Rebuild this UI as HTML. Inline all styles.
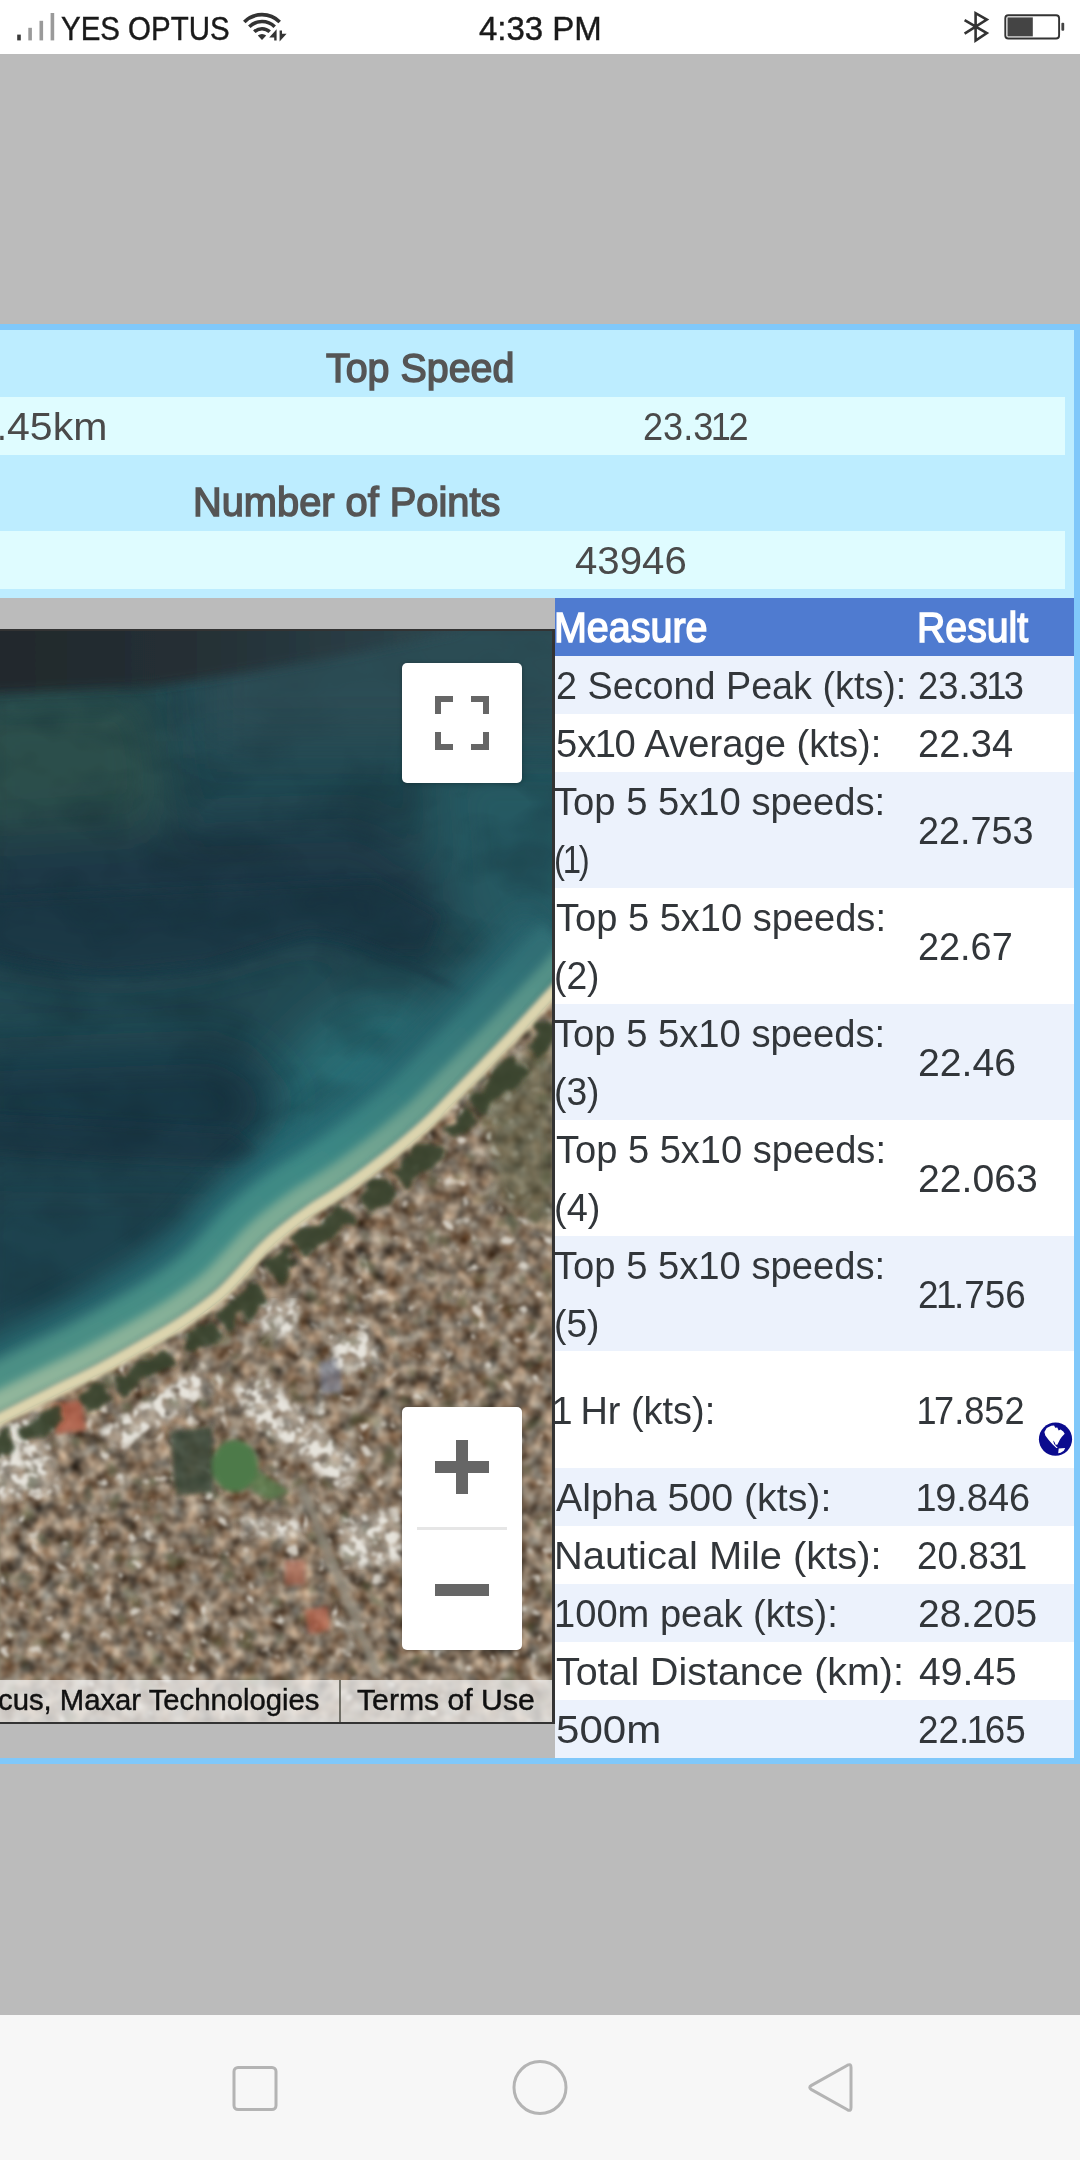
<!DOCTYPE html>
<html>
<head>
<meta charset="utf-8">
<title>GPS Session</title>
<style>
html,body{margin:0;padding:0;}
body{width:1080px;height:2160px;overflow:hidden;background:#bbbbbb;font-family:"Liberation Sans",sans-serif;position:relative;}
.abs{position:absolute;}
.tx i{font-style:normal;}
.tx{position:absolute;white-space:nowrap;transform-origin:0 0;}
#status{left:0;top:0;width:1080px;height:54px;background:#ffffff;}
#panel{left:-600px;top:324px;width:1668px;height:1428px;border:6px solid #80c8fa;background:#bbbbbb;}
#top{left:0;top:330px;width:1074px;height:268px;background:#bdedff;}
.lrow{position:absolute;left:0;width:1065px;height:58px;background:#dffcff;}
#tbl{left:555px;top:598px;width:519px;height:1160px;background:#ffffff;}
.r{position:absolute;left:0;width:519px;}
.r.h{background:#4f7bd0;}
.r.a{background:#ecf2fc;}
.r.b{background:#ffffff;}
#map{left:0;top:629px;width:552px;height:1091px;border-top:2px solid #333;border-right:3px solid #333;border-bottom:2.5px solid #333;overflow:hidden;background:#1f4a55;}
.btn{position:absolute;background:#ffffff;border-radius:5px;box-shadow:0 1px 4px rgba(0,0,0,0.3);}
#attr{position:absolute;left:0;top:1049px;width:552px;height:42px;background:rgba(245,245,245,0.72);}
#texts{position:absolute;left:0;top:0;width:1080px;height:2160px;will-change:transform;}
#nav{left:0;top:2015px;width:1080px;height:145px;background:#f7f7f7;}
</style>
</head>
<body>
<div id="status" class="abs"></div>

<div id="panel" class="abs"></div>
<div id="top" class="abs">
  <div class="lrow" style="top:67px;"></div>
  <div class="lrow" style="top:201px;"></div>
</div>

<div id="map" class="abs">
  <svg width="552" height="1091" viewBox="0 0 552 1091" style="position:absolute;left:0;top:0;display:block;">
<defs>
  <filter id="b6" x="-20%" y="-20%" width="140%" height="140%"><feGaussianBlur stdDeviation="6"/></filter>
  <filter id="b12" x="-30%" y="-30%" width="160%" height="160%"><feGaussianBlur stdDeviation="12"/></filter>
  <filter id="b25" x="-50%" y="-50%" width="200%" height="200%"><feGaussianBlur stdDeviation="25"/></filter>
  <filter id="b3" x="-10%" y="-10%" width="120%" height="120%"><feGaussianBlur stdDeviation="2.5"/></filter>
  <filter id="veg" x="-10%" y="-10%" width="120%" height="120%">
    <feTurbulence type="fractalNoise" baseFrequency="0.045" numOctaves="2" seed="9" result="t"/>
    <feDisplacementMap in="SourceGraphic" in2="t" scale="22" xChannelSelector="R" yChannelSelector="G" result="d"/>
    <feGaussianBlur in="d" stdDeviation="2.2"/>
  </filter>
  <filter id="b5" x="-10%" y="-10%" width="120%" height="120%"><feGaussianBlur stdDeviation="4.5"/></filter>
  <filter id="b1"><feGaussianBlur stdDeviation="2"/></filter>
  <!-- town texture -->
  <filter id="town" x="0" y="0" width="100%" height="100%" color-interpolation-filters="sRGB">
    <feTurbulence type="fractalNoise" baseFrequency="0.07" numOctaves="2" seed="7" result="n"/>
    <feColorMatrix in="n" type="matrix" values="
      0.80 0.24 0 0 0.00
      0.80 0.10 0 0 0.005
      0.76 0 0 0 0.005
      0 0 0 0 1" result="c"/>
    <feGaussianBlur in="c" stdDeviation="1.8" result="cb"/>
    <feComposite in="cb" in2="SourceGraphic" operator="in"/>
  </filter>
  <filter id="roofs2" x="0" y="0" width="100%" height="100%" color-interpolation-filters="sRGB">
    <feTurbulence type="fractalNoise" baseFrequency="0.09" numOctaves="2" seed="31" result="n"/>
    <feColorMatrix in="n" type="matrix" values="
      0 0 0 0 0.90
      0 0 0 0 0.89
      0 0 0 0 0.86
      7 0 0 0 -3.3" result="c"/>
    <feGaussianBlur in="SourceGraphic" stdDeviation="3" result="sg"/>
    <feComposite in="c" in2="sg" operator="in" result="cc"/>
    <feGaussianBlur in="cc" stdDeviation="1.5"/>
  </filter>
  <filter id="roofs" x="0" y="0" width="100%" height="100%" color-interpolation-filters="sRGB">
    <feTurbulence type="fractalNoise" baseFrequency="0.07" numOctaves="2" seed="23" result="n"/>
    <feColorMatrix in="n" type="matrix" values="
      0 0 0 0 0.86
      0 0 0 0 0.84
      0 0 0 0 0.80
      7 0 0 0 -4.7" result="c"/>
    <feGaussianBlur in="c" stdDeviation="1.6" result="cb"/>
    <feComposite in="cb" in2="SourceGraphic" operator="in"/>
  </filter>
  <filter id="greens" x="0" y="0" width="100%" height="100%" color-interpolation-filters="sRGB">
    <feTurbulence type="fractalNoise" baseFrequency="0.05" numOctaves="2" seed="51" result="n"/>
    <feColorMatrix in="n" type="matrix" values="
      0 0 0 0 0.30
      0 0 0 0 0.34
      0 0 0 0 0.22
      0 6 0 0 -3.7" result="c"/>
    <feGaussianBlur in="c" stdDeviation="2" result="cb"/>
    <feComposite in="cb" in2="SourceGraphic" operator="in"/>
  </filter>
  <filter id="seanoise" x="0" y="0" width="100%" height="100%" color-interpolation-filters="sRGB">
    <feTurbulence type="fractalNoise" baseFrequency="0.012 0.02" numOctaves="3" seed="4" result="n"/>
    <feColorMatrix in="n" type="matrix" values="
      0 0 0 0 0.05
      0 0 0 0 0.14
      0 0 0 0 0.18
      2.2 0 0 0 -0.85"/>
  </filter>
  <linearGradient id="dk" gradientUnits="userSpaceOnUse" x1="0" y1="0" x2="480" y2="0"><stop offset="0" stop-color="#232729"/><stop offset="0.4" stop-color="#252f33"/><stop offset="0.75" stop-color="#2a4047"/><stop offset="1" stop-color="#335259"/></linearGradient>
  <linearGradient id="sh1" gradientUnits="userSpaceOnUse" x1="552" y1="330" x2="0" y2="760"><stop offset="0" stop-color="#2b7079"/><stop offset="0.5" stop-color="#2b7c84"/><stop offset="1" stop-color="#2a767c"/></linearGradient>
  <linearGradient id="sh2" gradientUnits="userSpaceOnUse" x1="552" y1="340" x2="0" y2="770"><stop offset="0" stop-color="#347f84"/><stop offset="0.45" stop-color="#45a098"/><stop offset="1" stop-color="#58a898"/></linearGradient>
  <linearGradient id="sh3" gradientUnits="userSpaceOnUse" x1="552" y1="350" x2="0" y2="780"><stop offset="0" stop-color="#5fa89a"/><stop offset="0.45" stop-color="#8fc8aa"/><stop offset="1" stop-color="#aed8b4"/></linearGradient>
  <linearGradient id="sea" x1="0" y1="0" x2="1" y2="0">
    <stop offset="0" stop-color="#27524f"/><stop offset="0.35" stop-color="#214a52"/><stop offset="0.75" stop-color="#224e5a"/><stop offset="1" stop-color="#2b6670"/>
  </linearGradient>
  <path id="coast" d="M580.0,332.0 C574.8,337.7 560.2,353.8 549.0,366.0 C537.8,378.2 523.7,393.7 513.0,405.0 C502.3,416.3 494.2,424.5 485.0,434.0 C475.8,443.5 466.7,452.7 457.5,462.0 C448.3,471.3 439.6,481.0 430.0,490.0 C420.4,499.0 410.3,507.5 400.0,516.0 C389.7,524.5 378.5,533.2 368.0,541.0 C357.5,548.8 346.7,556.5 337.0,563.0 C327.3,569.5 318.3,574.3 310.0,580.0 C301.7,585.7 294.8,590.7 287.0,597.0 C279.2,603.3 273.8,607.2 263.0,618.0 C252.2,628.8 235.6,649.7 222.0,662.0 C208.4,674.3 195.1,683.0 181.5,692.0 C167.9,701.0 154.3,708.2 140.7,716.0 C127.1,723.8 114.8,730.8 100.0,738.5 C85.2,746.2 68.7,753.8 52.0,762.0 C35.3,770.2 13.7,781.3 0.0,788.0 C-13.7,794.7 -25.0,799.7 -30.0,802.0"/>
  <clipPath id="land"><path transform="translate(3,3)" d="M580.0,332.0 C574.8,337.7 560.2,353.8 549.0,366.0 C537.8,378.2 523.7,393.7 513.0,405.0 C502.3,416.3 494.2,424.5 485.0,434.0 C475.8,443.5 466.7,452.7 457.5,462.0 C448.3,471.3 439.6,481.0 430.0,490.0 C420.4,499.0 410.3,507.5 400.0,516.0 C389.7,524.5 378.5,533.2 368.0,541.0 C357.5,548.8 346.7,556.5 337.0,563.0 C327.3,569.5 318.3,574.3 310.0,580.0 C301.7,585.7 294.8,590.7 287.0,597.0 C279.2,603.3 273.8,607.2 263.0,618.0 C252.2,628.8 235.6,649.7 222.0,662.0 C208.4,674.3 195.1,683.0 181.5,692.0 C167.9,701.0 154.3,708.2 140.7,716.0 C127.1,723.8 114.8,730.8 100.0,738.5 C85.2,746.2 68.7,753.8 52.0,762.0 C35.3,770.2 13.7,781.3 0.0,788.0 C-13.7,794.7 -25.0,799.7 -30.0,802.0 L-30,1100 L600,1100 L600,332 Z"/></clipPath>
</defs>
<rect x="0" y="0" width="552" height="1091" fill="#224f58"/>
<!-- ocean shading -->
<g filter="url(#b25)">
  <path d="M-40,60 L150,55 L170,190 L-40,200 Z" fill="#2e5650"/>
  <path d="M430,120 L600,120 L600,340 L490,370 L450,280 Z" fill="#27646c"/>
  <ellipse cx="345" cy="465" rx="70" ry="120" transform="rotate(42 345 465)" fill="#2c7c82"/>
  <path d="M-40,200 L376,186 L460,269 L425,322 L389,321 L311,300 L207,331 L104,341 L-40,321 Z" fill="#1a3a48"/>
</g>
<g filter="url(#b6)">
  <path d="M-40,270 L376,250 L440,285 L425,322 L389,321 L311,300 L207,331 L104,341 L-40,321 Z" fill="#1a3a48" opacity="0.85"/>
</g>
<g filter="url(#b25)">
  <path d="M-40,425 L230,415 L290,469 L240,529 L-40,519 Z" fill="#173a49"/>
  <path d="M-40,539 L230,544 L250,599 L190,659 L100,709 L-40,769 Z" fill="#1d4652"/>
</g>
<g filter="url(#b6)">
  <path d="M-40,485 L100,492 L235,500 L262,525 L240,534 L100,528 L-40,519 Z" fill="#173a49" opacity="0.85"/>
</g>
<rect x="0" y="0" width="552" height="1091" filter="url(#seanoise)" opacity="0.3"/>
<!-- dark top -->
<g filter="url(#b25)">
  <path d="M200,-40 L620,-40 L620,110 L200,110 Z" fill="#33545b" opacity="0.7"/>
</g>
<g filter="url(#b6)">
  <path d="M-30,-30 L500,-30 L455,0 L358,22 L255,40 L153,56 L-30,64 Z" fill="url(#dk)"/>
</g>
<!-- wavy edge -->
<g filter="url(#b3)" opacity="0.55">
  <path d="M-10,322 C60,349 150,344 207,335 C260,326 290,302 325,304 C360,306 380,324 420,339 C450,354 470,364 480,379" fill="none" stroke="#193a48" stroke-width="8"/>
</g>
<!-- shallow water -->
<g filter="url(#b12)" opacity="0.9">
  <use href="#coast" transform="translate(-30,-32)" fill="none" stroke="url(#sh1)" stroke-width="70"/>
</g>
<g filter="url(#b6)">
  <use href="#coast" transform="translate(-24,-26)" fill="none" stroke="url(#sh2)" stroke-width="40"/>
</g>
<g filter="url(#b5)">
  <use href="#coast" transform="translate(-11,-12)" fill="none" stroke="url(#sh3)" stroke-width="22"/>
</g>
<rect x="0" y="0" width="552" height="1091" fill="#22343a" opacity="0.2"/>
<!-- land -->
<g clip-path="url(#land)">
  <rect x="0" y="340" width="552" height="751" fill="#8b7f6a"/>
  <rect x="0" y="340" width="552" height="751" filter="url(#town)"/>
  <rect x="0" y="340" width="552" height="751" filter="url(#greens)" opacity="0.5"/>
  <rect x="0" y="340" width="552" height="751" filter="url(#roofs)" opacity="0.9"/>
  <g transform="translate(0,-631)">
    <g filter="url(#b6)" opacity="0.55">
      <path d="M480,1090 L552,1030 L552,1230 L500,1200 Z" fill="#5f6348"/>
    </g>
    <g filter="url(#b3)">
      <path d="M232,1388 L262,1374 L362,1468 L342,1492 L292,1452 L252,1424 Z M98,1432 L196,1368 L214,1388 L120,1452 Z M337,1520 L398,1508 L404,1560 L345,1570 Z M240,1519 L300,1519 L300,1536 L240,1536 Z M258,1302 L294,1298 L298,1334 L264,1338 Z M-5,1425 L40,1415 L60,1490 L-5,1500 Z M330,1340 L372,1330 L380,1365 L338,1372 Z" fill="#cfcac2" opacity="0.35"/>
      <path d="M52,1404 L82,1400 L86,1430 L56,1434 Z" fill="#b8604a" opacity="0.8"/>
      <path d="M285,1560 L305,1560 L305,1585 L285,1585 Z" fill="#b8705c" opacity="0.7"/>
      <path d="M305,1610 L328,1606 L330,1630 L308,1634 Z" fill="#b8604a" opacity="0.7"/>
      <path d="M318,1362 L340,1358 L342,1392 L322,1394 Z" fill="#8088a0" opacity="0.6"/>
      <path d="M301,1484 L378,1676" stroke="#8f897c" stroke-width="9" fill="none" opacity="0.8"/>
      <path d="M170,1432 L212,1426 L214,1492 L176,1496 Z" fill="#39483a" opacity="0.8"/>
      <path d="M258,1470 L290,1492 L270,1500 L250,1490 Z" fill="#557a4a" opacity="0.8"/>
      <ellipse cx="235" cy="1466" rx="23" ry="26" fill="#4d7a48"/>
    </g>
    <path d="M232,1388 L262,1374 L362,1468 L342,1492 L292,1452 L252,1424 Z M98,1432 L196,1368 L214,1388 L120,1452 Z M337,1520 L398,1508 L404,1560 L345,1570 Z M240,1519 L300,1519 L300,1536 L240,1536 Z M258,1302 L294,1298 L298,1334 L264,1338 Z M-5,1425 L40,1415 L60,1490 L-5,1500 Z M330,1340 L372,1330 L380,1365 L338,1372 Z" fill="#fff" filter="url(#roofs2)"/>
  </g>
</g>
<!-- vegetation strip -->
<g filter="url(#veg)">
  <use href="#coast" transform="translate(16,18)" fill="none" stroke="#37432a" stroke-width="21" stroke-dasharray="50 10 34 16 64 8 26 22" opacity="0.92"/>
</g>
<!-- sand -->
<g filter="url(#b1)">
  <use href="#coast" fill="none" stroke="#dcd4ae" stroke-width="13"/>
</g>
</svg>

  <div class="btn" style="left:402px;top:32px;width:120px;height:120px;">
    <svg width="120" height="120" viewBox="0 0 120 120" style="position:absolute;left:0;top:0"><g fill="#666">
      <path d="M33,33 h18 v6 h-12 v12 h-6 Z"/><path d="M87,33 v18 h-6 v-12 h-12 v-6 Z"/>
      <path d="M33,87 v-18 h6 v12 h12 v6 Z"/><path d="M87,87 h-18 v-6 h12 v-12 h6 Z"/></g></svg>
  </div>
  <div class="btn" style="left:402px;top:776px;width:120px;height:243px;">
    <svg width="120" height="243" viewBox="0 0 120 243" style="position:absolute;left:0;top:0">
      <rect x="33" y="54" width="54" height="12" fill="#666"/><rect x="54" y="33" width="12" height="54" fill="#666"/>
      <rect x="15" y="120" width="90" height="3" fill="#e6e6e6"/>
      <rect x="33" y="177" width="54" height="12" fill="#666"/></svg>
  </div>
  <div id="attr"><div style="position:absolute;left:339px;top:0;width:2px;height:44px;background:rgba(70,70,60,0.7)"></div></div>
</div>

<div id="tbl" class="abs">
  <div class="r h" style="top:0;height:58px;"></div>
  <div class="r a" style="top:58px;height:58px;"></div>
  <div class="r b" style="top:116px;height:58px;"></div>
  <div class="r a" style="top:174px;height:116px;"></div>
  <div class="r b" style="top:290px;height:116px;"></div>
  <div class="r a" style="top:406px;height:116px;"></div>
  <div class="r b" style="top:522px;height:116px;"></div>
  <div class="r a" style="top:638px;height:115px;"></div>
  <div class="r b" style="top:753px;height:117px;"></div>
  <div class="r a" style="top:870px;height:58px;"></div>
  <div class="r b" style="top:928px;height:58px;"></div>
  <div class="r a" style="top:986px;height:58px;"></div>
  <div class="r b" style="top:1044px;height:58px;"></div>
  <div class="r a" style="top:1102px;height:58px;"></div>
</div>

<div id="nav" class="abs"></div>

<svg class="abs" style="left:0;top:0;" width="1080" height="54" viewBox="0 0 1080 54">
  <!-- signal -->
  <rect x="17.2" y="34.6" width="3.6" height="5.8" fill="#3a3a3a"/>
  <rect x="28.3" y="27.8" width="3.6" height="12.6" fill="#9a9a9a"/>
  <rect x="39.5" y="20.8" width="3.6" height="19.6" fill="#9a9a9a"/>
  <rect x="50.6" y="13" width="3.6" height="27.4" fill="#9a9a9a"/>
  <!-- wifi -->
  <g fill="none" stroke="#333" stroke-width="3.6">
    <path d="M244.3,22.0 A25,25 0 0 1 279.7,22.0"/>
    <path d="M249.3,26.7 A18.2,18.2 0 0 1 274.7,26.7"/>
    <path d="M254.3,31.8 A11.2,11.2 0 0 1 269.7,31.8"/>
  </g>
  <path d="M262,40 L257.8,35.6 A6,6 0 0 1 266.2,35.6 Z" fill="#333"/>
  <path d="M276.6,29.2 L276.6,40.6 L274.2,40.6 L274.2,37.4 L269.2,37.4 Z" fill="#333"/>
  <path d="M279.6,30.4 L282.0,30.4 L282.0,33.8 L286.6,33.8 L279.6,41.4 Z" fill="#333"/>
  <!-- bluetooth -->
  <path d="M964.6,20.2 L986.8,33 L975.6,40.6 L975.6,13.2 L986.8,19.6 L964.6,33.6" fill="none" stroke="#333" stroke-width="2.6" stroke-linejoin="miter"/>
  <!-- battery -->
  <rect x="1005.3" y="15.3" width="53.8" height="23.2" rx="3" ry="3" fill="none" stroke="#333" stroke-width="1.9"/>
  <rect x="1007.5" y="17.4" width="25.3" height="19" fill="#444"/>
  <rect x="1061.4" y="22.8" width="2.8" height="8" rx="1" fill="#444"/>
</svg>
<svg class="abs" style="left:0;top:2015px;" width="1080" height="145" viewBox="0 2015 1080 145">
  <g fill="none" stroke="#b4b4b4" stroke-width="3" stroke-linejoin="round">
    <rect x="234" y="2067.5" width="42" height="42" rx="4"/>
    <circle cx="540" cy="2087.5" r="26"/>
    <path d="M811.5,2085.4 L847.5,2065.2 Q851,2063.4 851,2067.5 L851,2107.5 Q851,2111.6 847.5,2109.8 L811.5,2089.6 Q808,2087.5 811.5,2085.4 Z"/>
  </g>
</svg>
<!-- globe -->
<svg class="abs" style="left:1036px;top:1420px;" width="40" height="40" viewBox="1036 1420 40 40">
  <circle cx="1055.5" cy="1439.2" r="16.6" fill="#0b0b8e"/>
  <path d="M1044.4,1431.9 L1046.7,1428.1 L1051.3,1425.8 L1054.1,1425.4 L1055.2,1427.7 L1057.3,1427.4 L1058.7,1430.5 L1060.6,1429.5 L1063.3,1431.4 L1064.7,1433.7 L1061.9,1436.7 L1060.1,1439.3 L1058.7,1441.9 L1057.3,1444.8 L1055.5,1444.8 L1054.5,1442.0 L1053.1,1440.6 L1054.1,1443.9 L1057.8,1448.1 L1056.4,1448.1 L1052.2,1443.9 L1048.5,1439.7 L1045.3,1435.6 Z" fill="#fff"/>
  <path d="M1058.7,1448.5 L1065.2,1448.0 L1063.8,1450.8 L1060.6,1452.7 L1058.2,1453.2 Z" fill="#fff"/>
</svg>


<div id="texts">
<span class="tx" style="left:61.0px;top:6.2px;font-size:34px;line-height:44px;transform:scaleX(0.8663);color:#1a1a1a;-webkit-text-stroke:0.45px #1a1a1a;">YES OPTUS</span>
<span class="tx" style="left:478.5px;top:6.2px;font-size:34px;line-height:44px;transform:scaleX(0.9694);color:#1a1a1a;-webkit-text-stroke:0.45px #1a1a1a;">4:33 PM</span>
<span class="tx" style="left:326.0px;top:342.0px;font-size:41px;line-height:53px;transform:scaleX(0.9611);color:#555555;-webkit-text-stroke:1.5px #555555;">Top Speed</span>
<span class="tx" style="left:193.1px;top:476.0px;font-size:41px;line-height:53px;transform:scaleX(0.9705);color:#555555;-webkit-text-stroke:1.5px #555555;">Number of Points</span>
<span class="tx" style="left:7.3px;top:401.0px;font-size:39px;line-height:51px;transform:scaleX(1.0519);color:#4a4a4a;">45km</span>
<span class="tx" style="left:-3.2px;top:401.0px;font-size:39px;line-height:51px;transform:scaleX(0.9000);color:#4a4a4a;">.</span>
<span class="tx" style="left:-2.5px;top:1680.1px;font-size:30px;line-height:39px;transform:scaleX(0.9751);color:#111111;-webkit-text-stroke:0.45px #111111;">cus, Maxar Technologies</span>
<span class="tx" style="left:356.5px;top:1680.1px;font-size:30px;line-height:39px;transform:scaleX(1.0061);color:#111111;-webkit-text-stroke:0.45px #111111;">Terms of Use</span>
<span class="tx" style="left:642.6px;top:401.0px;font-size:39px;line-height:51px;transform:scaleX(0.9263);color:#4a4a4a;">23.3<i style="margin:0 -2.70px">1</i>2</span>
<span class="tx" style="left:575.0px;top:535.0px;font-size:39px;line-height:51px;transform:scaleX(1.0304);color:#4a4a4a;">43946</span>
<span class="tx" style="left:553.9px;top:599.1px;font-size:43px;line-height:56px;transform:scaleX(0.9176);color:#ffffff;-webkit-text-stroke:1.5px #ffffff;">Measure</span>
<span class="tx" style="left:917.3px;top:599.1px;font-size:43px;line-height:56px;transform:scaleX(0.9123);color:#ffffff;-webkit-text-stroke:1.5px #ffffff;">Result</span>
<span class="tx" style="left:555.7px;top:659.5px;font-size:39px;line-height:51px;transform:scaleX(0.9677);color:#32363a;">2 Second Peak (kts):</span>
<span class="tx" style="left:918.1px;top:659.5px;font-size:39px;line-height:51px;transform:scaleX(0.9308);color:#32363a;">23.3<i style="margin:0 -2.70px">1</i>3</span>
<span class="tx" style="left:556.0px;top:717.5px;font-size:39px;line-height:51px;transform:scaleX(0.9790);color:#32363a;">5x<i style="margin:0 -1.53px">1</i>0 Average (kts):</span>
<span class="tx" style="left:918.0px;top:717.5px;font-size:39px;line-height:51px;transform:scaleX(0.9749);color:#32363a;">22.34</span>
<span class="tx" style="left:554.0px;top:775.5px;font-size:39px;line-height:51px;transform:scaleX(0.9791);color:#32363a;">Top 5 5x10 speeds:</span>
<span class="tx" style="left:554.3px;top:833.5px;font-size:39px;line-height:51px;transform:scaleX(0.8438);color:#32363a;">(<i style="margin:0 -2.70px">1</i>)</span>
<span class="tx" style="left:918.0px;top:805.0px;font-size:39px;line-height:51px;transform:scaleX(0.9683);color:#32363a;">22.753</span>
<span class="tx" style="left:555.5px;top:891.5px;font-size:39px;line-height:51px;transform:scaleX(0.9755);color:#32363a;">Top 5 5x10 speeds:</span>
<span class="tx" style="left:554.1px;top:949.5px;font-size:39px;line-height:51px;transform:scaleX(0.9547);color:#32363a;">(2)</span>
<span class="tx" style="left:918.0px;top:921.0px;font-size:39px;line-height:51px;transform:scaleX(0.9704);color:#32363a;">22.67</span>
<span class="tx" style="left:554.0px;top:1007.5px;font-size:39px;line-height:51px;transform:scaleX(0.9791);color:#32363a;">Top 5 5x10 speeds:</span>
<span class="tx" style="left:554.1px;top:1065.5px;font-size:39px;line-height:51px;transform:scaleX(0.9547);color:#32363a;">(3)</span>
<span class="tx" style="left:918.0px;top:1037.0px;font-size:39px;line-height:51px;transform:scaleX(1.0052);color:#32363a;">22.46</span>
<span class="tx" style="left:555.5px;top:1123.5px;font-size:39px;line-height:51px;transform:scaleX(0.9755);color:#32363a;">Top 5 5x10 speeds:</span>
<span class="tx" style="left:554.1px;top:1181.5px;font-size:39px;line-height:51px;transform:scaleX(0.9730);color:#32363a;">(4)</span>
<span class="tx" style="left:918.0px;top:1153.0px;font-size:39px;line-height:51px;transform:scaleX(1.0043);color:#32363a;">22.063</span>
<span class="tx" style="left:554.0px;top:1239.5px;font-size:39px;line-height:51px;transform:scaleX(0.9791);color:#32363a;">Top 5 5x10 speeds:</span>
<span class="tx" style="left:554.1px;top:1297.5px;font-size:39px;line-height:51px;transform:scaleX(0.9547);color:#32363a;">(5)</span>
<span class="tx" style="left:918.1px;top:1269.0px;font-size:39px;line-height:51px;transform:scaleX(0.9461);color:#32363a;">2<i style="margin:0 -2.70px">1</i>.756</span>
<span class="tx" style="left:554.1px;top:1385.0px;font-size:39px;line-height:51px;transform:scaleX(0.9720);color:#32363a;"><i style="margin:0 -2.66px">1</i> Hr (kts):</span>
<span class="tx" style="left:919.1px;top:1385.0px;font-size:39px;line-height:51px;transform:scaleX(0.9262);color:#32363a;"><i style="margin:0 -2.70px">1</i>7.852</span>
<span class="tx" style="left:556.0px;top:1471.5px;font-size:39px;line-height:51px;transform:scaleX(1.0081);color:#32363a;">Alpha 500 (kts):</span>
<span class="tx" style="left:917.1px;top:1471.5px;font-size:39px;line-height:51px;transform:scaleX(0.9720);color:#32363a;"><i style="margin:0 -1.47px">1</i>9.846</span>
<span class="tx" style="left:553.9px;top:1529.5px;font-size:39px;line-height:51px;transform:scaleX(1.0210);color:#32363a;">Nautical Mile (kts):</span>
<span class="tx" style="left:917.1px;top:1529.5px;font-size:39px;line-height:51px;transform:scaleX(0.9446);color:#32363a;">20.83<i style="margin:0 -2.70px">1</i></span>
<span class="tx" style="left:554.0px;top:1587.5px;font-size:39px;line-height:51px;transform:scaleX(0.9769);color:#32363a;">100m peak (kts):</span>
<span class="tx" style="left:918.0px;top:1587.5px;font-size:39px;line-height:51px;transform:scaleX(0.9992);color:#32363a;">28.205</span>
<span class="tx" style="left:556.0px;top:1645.5px;font-size:39px;line-height:51px;transform:scaleX(1.0095);color:#32363a;">Total Distance (km):</span>
<span class="tx" style="left:919.0px;top:1645.5px;font-size:39px;line-height:51px;transform:scaleX(1.0010);color:#32363a;">49.45</span>
<span class="tx" style="left:555.9px;top:1703.5px;font-size:39px;line-height:51px;transform:scaleX(1.0790);color:#32363a;">500m</span>
<span class="tx" style="left:918.1px;top:1703.5px;font-size:39px;line-height:51px;transform:scaleX(0.9448);color:#32363a;">22.<i style="margin:0 -2.70px">1</i>65</span>
</div>
</body>
</html>
